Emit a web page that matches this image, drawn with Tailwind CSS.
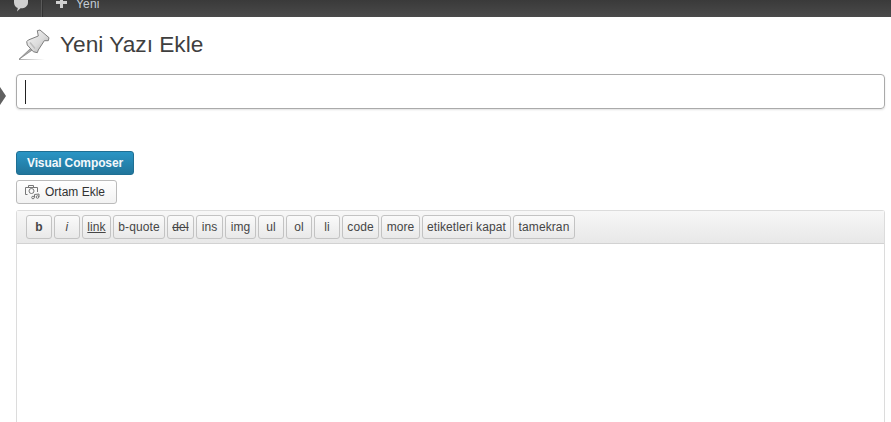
<!DOCTYPE html>
<html><head><meta charset="utf-8"><script src="https://cdn.jsdelivr.net/npm/@tailwindcss/browser@4"></script></head>
<body class="bg-white overflow-hidden font-['Liberation_Sans',Arial,sans-serif]">
<div class="w-[891px] h-[422px] overflow-hidden relative">
  <header class="h-[17px] bg-gradient-to-b from-[#3a3a3a] to-[#4a4a4a] flex items-end overflow-hidden text-[#ccc] text-[12px]">
    <div class="w-[42px] h-full border-r border-[#5a5a5a] shadow-[1px_0_0_#333] flex items-start justify-center">
      <svg width="16" height="12" viewBox="0 0 16 12" class="block"><path d="M1 0H15V2.500C15 6 12 8.300 8 8.300H7.500L4 11.500L4.800 8C2.500 7.300 1 5 1 2.500Z" fill="#d0d0d0"/></svg>
    </div>
    <div class="h-full flex items-start pl-[14px] gap-[9px]">
      <svg width="11" height="8" viewBox="0 0 11 8" class="block"><path d="M4 0H7V1H11V4H7V8H4V4H0V1H4Z" fill="#d0d0d0"/></svg>
      <span class="leading-[9px] h-[9px] block tracking-[0.2px] text-[#c4cdd6]">Yeni</span>
    </div>
  </header>
  <main class="relative pl-[16px] pr-[6px]">
    <div class="h-[57px] flex items-start pt-[11px]">
      <svg width="32" height="33" viewBox="0 0 32 33" class="block ml-[2px] mr-[10px]">
        <defs>
          <linearGradient id="p" x1="0" y1="0" x2="1" y2="1"><stop offset="0" stop-color="#f6f6f6"/><stop offset=".55" stop-color="#dcdcdc"/><stop offset="1" stop-color="#a4a4a4"/></linearGradient>
          <linearGradient id="s" x1="0" y1="0" x2="1" y2="0"><stop offset="0" stop-color="#aaa"/><stop offset="1" stop-color="#fff"/></linearGradient>
        </defs>
        <rect x="1" y="31" width="26" height="1" fill="url(#s)"/>
        <path d="M1 31.300L12.700 20.300L14.300 22Z" fill="#aaa" stroke="#7c7c7c" stroke-width=".7" stroke-linejoin="round"/>
        <path d="M19.300 2.700L22 2L31 9.700L30.300 12.700L26.300 12.700L20.300 22L19.300 24.700L15.300 23.700L9.300 17L8.700 13.700L10.300 12L20.300 8Z" fill="url(#p)" stroke="#7f7f7f" stroke-width="1" stroke-linejoin="round"/>
        <path d="M12 14.500L17 20.500" stroke="#bdbdbd" stroke-width="1.500" fill="none"/>
      </svg>
      <h1 class="text-[22.7px] leading-[28px] mt-[2px] text-[#3f3f3f] font-normal">Yeni Yazı Ekle</h1>
    </div>
    <div class="absolute left-0 top-[70px] w-0 h-0 border-y-[9px] border-y-transparent border-l-[6px] border-l-[#606060]"></div>
    <div class="h-[35px] border border-[#aaa] rounded-[4px] shadow-[0_1px_2px_rgba(0,0,0,0.12)] flex items-center pl-[8px]">
      <div class="w-[1px] h-[24px] bg-[#222]"></div>
    </div>
    <div class="mt-[42px] w-[118px] h-[24px] rounded-[3px] border border-[#1f6f93] bg-gradient-to-b from-[#2a95c5] to-[#21759b] text-[#f4f8fb] text-[12px] tracking-[-0.12px] font-bold flex items-center justify-center">Visual Composer</div>
    <div class="mt-[5px] w-[101px] h-[24px] rounded-[3px] border border-[#bbb] bg-gradient-to-b from-white to-[#f2f2f2] text-[12px] text-[#333] flex items-center pl-[7px] gap-[5px]">
      <svg width="16" height="16" viewBox="0 0 16 16" fill="none" stroke="#777" stroke-width="1" class="block">
        <path d="M4.500 3.500V1.500H9.500V3.500"/>
        <path d="M3.500 10.500H1.500V3.500H13.500V8"/>
        <circle cx="7.500" cy="7" r="2.500"/>
        <circle cx="9" cy="13.500" r="1.300"/><circle cx="13.500" cy="13" r="1.300"/>
        <path d="M10.500 13.500V10.500L15 10V13"/>
      </svg>
      <span>Ortam Ekle</span>
    </div>
    <section class="mt-[6px] border border-[#dcdcdc] border-b-0 rounded-t-[3px] h-[300px]">
      <div class="h-[33px] border-b border-[#d2d2d2] bg-gradient-to-b from-[#f7f7f7] to-[#e8e8e8] flex items-start pt-[4px] pl-[9px] gap-[2px] text-[12px] tracking-[0.1px] text-[#464646]">
        <span class="w-[26px] h-[24px] rounded-[3px] border border-[#c3c3c3] bg-gradient-to-b from-[#fafafa] to-[#e9e9e9] flex items-center justify-center font-bold">b</span>
        <span class="w-[26px] h-[24px] rounded-[3px] border border-[#c3c3c3] bg-gradient-to-b from-[#fafafa] to-[#e9e9e9] flex items-center justify-center italic">i</span>
        <span class="w-[29px] h-[24px] rounded-[3px] border border-[#c3c3c3] bg-gradient-to-b from-[#fafafa] to-[#e9e9e9] flex items-center justify-center underline">link</span>
        <span class="w-[52px] h-[24px] rounded-[3px] border border-[#c3c3c3] bg-gradient-to-b from-[#fafafa] to-[#e9e9e9] flex items-center justify-center">b-quote</span>
        <span class="w-[27px] h-[24px] rounded-[3px] border border-[#c3c3c3] bg-gradient-to-b from-[#fafafa] to-[#e9e9e9] flex items-center justify-center line-through">del</span>
        <span class="w-[27px] h-[24px] rounded-[3px] border border-[#c3c3c3] bg-gradient-to-b from-[#fafafa] to-[#e9e9e9] flex items-center justify-center">ins</span>
        <span class="w-[31px] h-[24px] rounded-[3px] border border-[#c3c3c3] bg-gradient-to-b from-[#fafafa] to-[#e9e9e9] flex items-center justify-center">img</span>
        <span class="w-[26px] h-[24px] rounded-[3px] border border-[#c3c3c3] bg-gradient-to-b from-[#fafafa] to-[#e9e9e9] flex items-center justify-center">ul</span>
        <span class="w-[26px] h-[24px] rounded-[3px] border border-[#c3c3c3] bg-gradient-to-b from-[#fafafa] to-[#e9e9e9] flex items-center justify-center">ol</span>
        <span class="w-[26px] h-[24px] rounded-[3px] border border-[#c3c3c3] bg-gradient-to-b from-[#fafafa] to-[#e9e9e9] flex items-center justify-center">li</span>
        <span class="w-[37px] h-[24px] rounded-[3px] border border-[#c3c3c3] bg-gradient-to-b from-[#fafafa] to-[#e9e9e9] flex items-center justify-center">code</span>
        <span class="w-[39px] h-[24px] rounded-[3px] border border-[#c3c3c3] bg-gradient-to-b from-[#fafafa] to-[#e9e9e9] flex items-center justify-center">more</span>
        <span class="w-[89px] h-[24px] rounded-[3px] border border-[#c3c3c3] bg-gradient-to-b from-[#fafafa] to-[#e9e9e9] flex items-center justify-center">etiketleri kapat</span>
        <span class="w-[62px] h-[24px] rounded-[3px] border border-[#c3c3c3] bg-gradient-to-b from-[#fafafa] to-[#e9e9e9] flex items-center justify-center">tamekran</span>
      </div>
    </section>
  </main>
</div>
</body></html>
